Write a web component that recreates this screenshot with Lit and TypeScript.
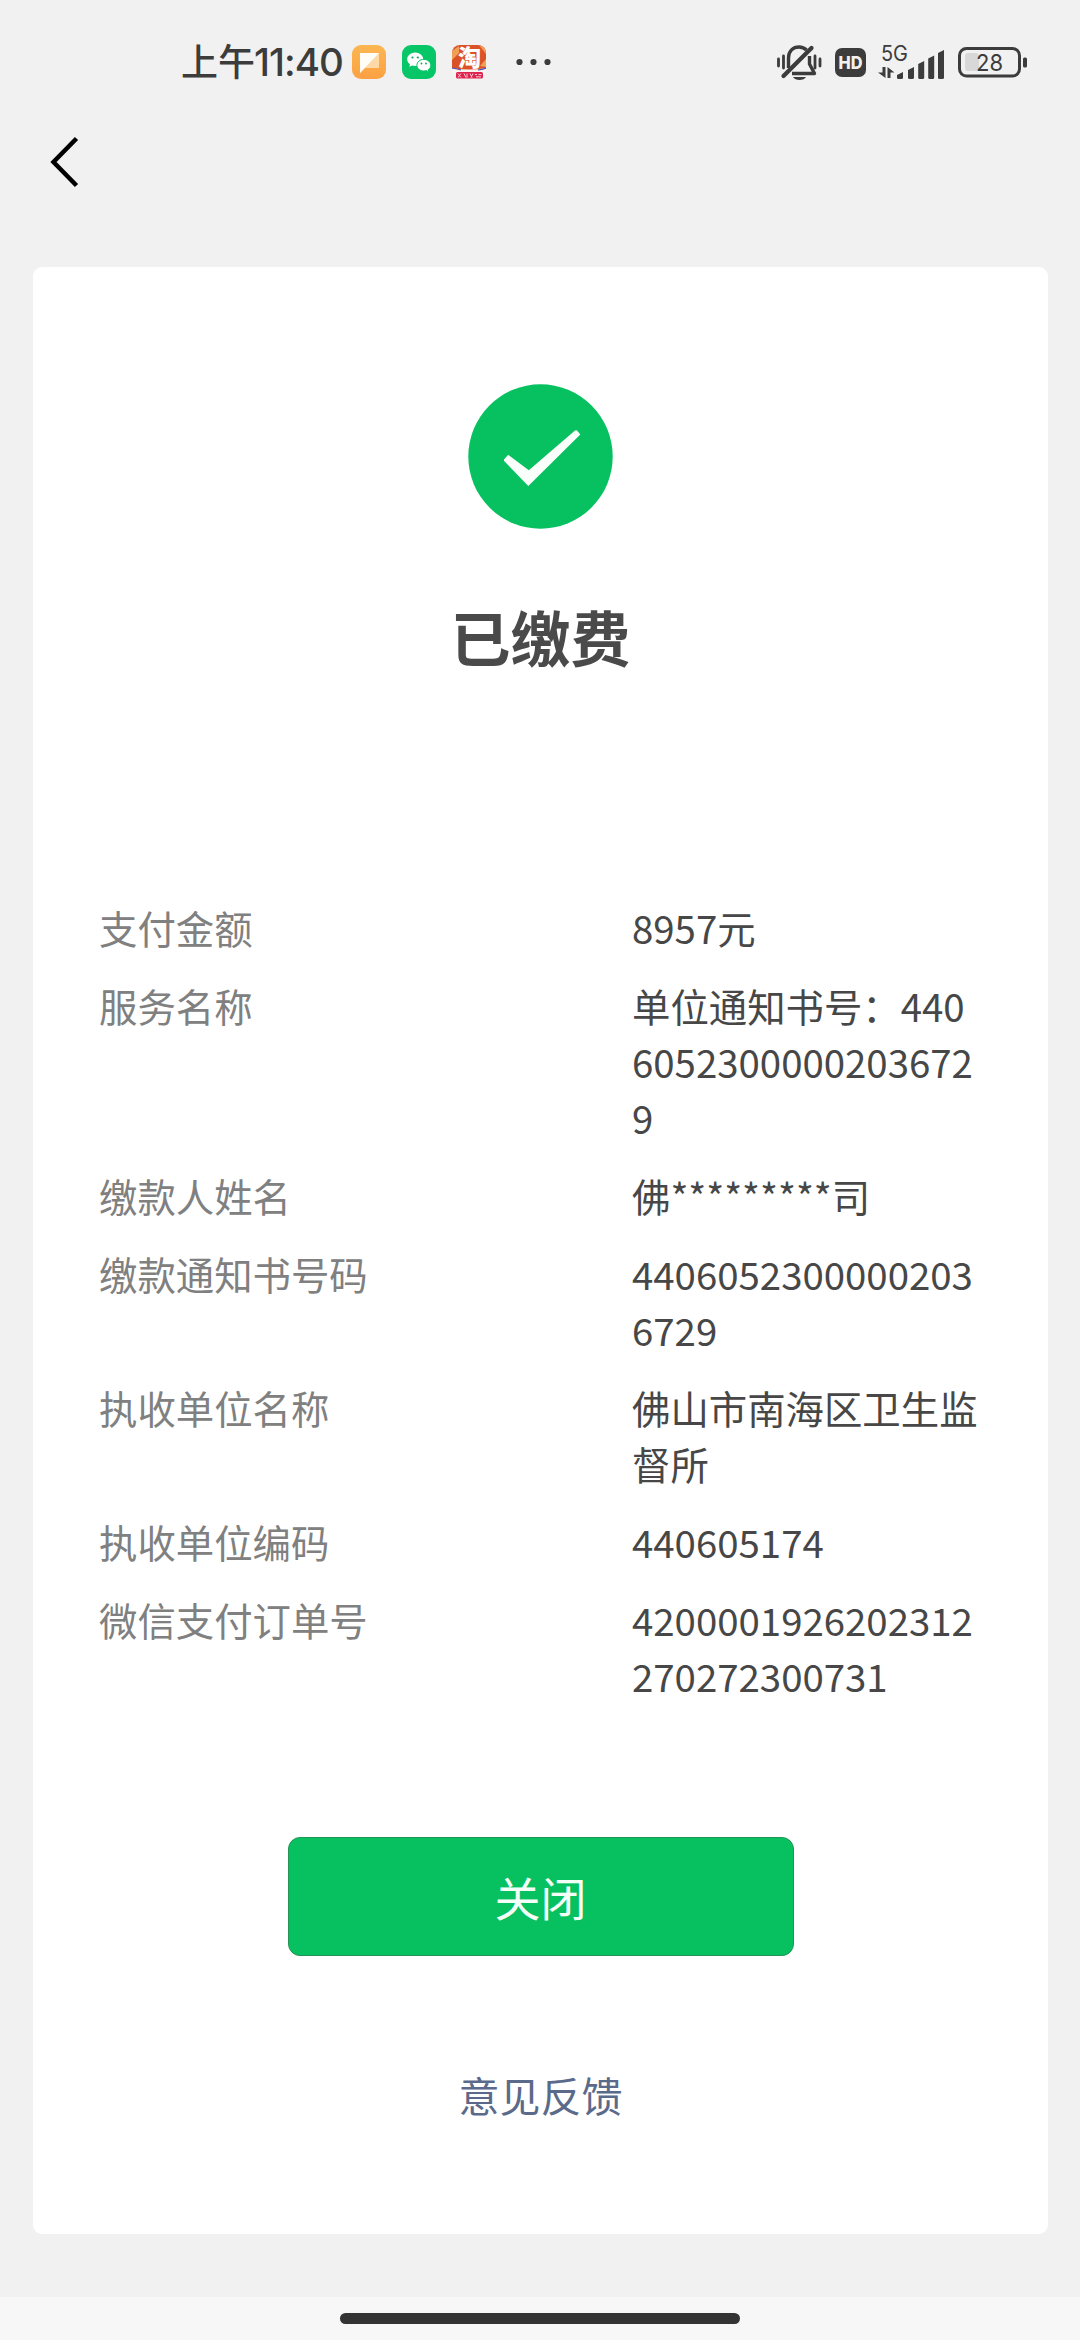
import { LitElement, html, css, svg } from "lit";
import { customElement } from "lit/decorators.js";

const INK = "#3c3c3c";

@customElement("status-bar")
class StatusBar extends LitElement {
  static styles = css`
    :host { display: flex; justify-content: space-between; align-items: center; height: 124px; padding: 0 52px 0 181px; box-sizing: border-box; }
    .left, .right { display: flex; align-items: center; }
    .time { display: flex; align-items: center; color: #3c3c3c; font-weight: 500; line-height: 50px; white-space: nowrap; }
    .ampm { font-family: "Noto Sans CJK SC", sans-serif; font-size: 37px; width: 73px; margin-top: -4px; }
    .clock { font-family: Inter, sans-serif; font-size: 38.5px; letter-spacing: -1px; width: 98px; }
    .apps { display: flex; gap: 16px; }
    .more { margin-left: 29px; }
    svg { display: block; overflow: visible; }
    .hd { margin-left: 13px; }
    .signal { margin-left: 12px; }
    .battery { margin-left: 13px; }
  `;
  render() {
    return html`
      <div class="left">
        <div class="time"><span class="ampm">上午</span><span class="clock">11:40</span></div>
        <div class="apps">
          <svg width="34" height="34" viewBox="0 0 34 34">
            <defs><linearGradient id="o" x1="0" y1="0" x2="0" y2="1"><stop offset="0" stop-color="#fbb652"/><stop offset="1" stop-color="#fda143"/></linearGradient></defs>
            <rect width="34" height="34" rx="9" fill="url(#o)"/>
            <path d="M8 8H27V23H13L8 28Z" fill="#fdd9a8"/><path d="M8 8H27L8 28Z" fill="#fffdf6"/>
          </svg>
          <svg width="34" height="34" viewBox="0 0 34 34">
            <rect width="34" height="34" rx="9" fill="#07c668"/>
            <path d="M13.200 7.500C8.800 7.500 5.200 10.500 5.200 14.200C5.200 16.300 6.300 18.100 8 19.300L7.300 21.800L10.200 20.400C11.200 20.700 12.200 20.900 13.200 20.900C17.600 20.900 21.200 17.900 21.200 14.200S17.600 7.500 13.200 7.500Z" fill="#fff"/>
            <path d="M21.800 14.400C17.900 14.400 14.900 17 14.900 20.200S17.900 26 21.800 26C22.700 26 23.500 25.900 24.300 25.600L26.900 26.900L26.300 24.600C27.900 23.600 28.800 22 28.800 20.200C28.800 17 25.700 14.400 21.800 14.400Z" fill="#fff" stroke="#07c668" stroke-width="1"/>
            <g fill="#07a858"><circle cx="10.500" cy="12.500" r="1.100"/><circle cx="15.800" cy="12.500" r="1.100"/><circle cx="19.500" cy="18.500" r=".9"/><circle cx="24" cy="18.500" r=".9"/></g>
          </svg>
          <svg width="34" height="34" viewBox="0 0 34 34">
            <defs><clipPath id="c"><rect width="34" height="34" rx="8"/></clipPath></defs>
            <g clip-path="url(#c)">
              <rect width="34" height="34" fill="#fbf3f0"/>
              <path d="M0 0H34V23Q17 26 0 23Z" fill="#dc5228"/>
              <path d="M0 6L7 1V8L0 15ZM27 0L34 9V3ZM28 21L34 14V22Z" fill="#f0a052"/>
              <path d="M0 23Q6 24 9 25M26 25Q30 24.500 34 23" fill="none" stroke="#4a4fb0" stroke-width="1.200"/>
            </g>
            <text x="17.500" y="21" text-anchor="middle" font-family="Noto Sans CJK SC" font-weight="900" font-size="23" fill="#fff">淘</text>
            <rect x="4" y="27" width="27" height="6.500" rx="1.500" fill="#dd2450"/>
            <path d="M6 28.500l3 4M9 28.500l-3 4M12 28.500l2 4M15 28.500v4M18 28.500l2 4M21 28.500l-2 4M23 29.500h2M26.500 29.500h3M24 31.800h5" stroke="#fbd7de" stroke-width=".9"/>
          </svg>
        </div>
        <svg class="more" width="36" height="8" viewBox="0 0 36 8" fill=${INK}><circle cx="4.500" cy="4" r="3.100"/><circle cx="18.500" cy="4" r="3.100"/><circle cx="32.500" cy="4" r="3.100"/></svg>
      </div>
      <div class="right">
        <svg width="45" height="38" viewBox="0 0 45 38" fill="none" stroke=${INK} stroke-width="3.400">
          <path d="M11.500 25V15C11.500 8 16 4 22 4C25 4 27.500 5 29.500 7M32.500 13V21L37.500 30.500H15" stroke-linejoin="round"/>
          <path d="M6.500 33L34.500 5" stroke-width="4.200" stroke-linecap="round"/>
          <path d="M16 34H29C27 38 18 38 16 34Z" fill=${INK} stroke="none"/>
          <path d="M1.500 16V23M6.500 13V25M38 13V25M43 16V23" stroke-width="2.800" stroke-linecap="round"/>
        </svg>
        <svg class="hd" width="31" height="29" viewBox="0 0 31 29"><rect width="31" height="29" rx="7" fill=${INK}/><text x="15.500" y="20.700" text-anchor="middle" textLength="24" lengthAdjust="spacingAndGlyphs" font-family="Inter" font-weight="800" font-size="17.500" fill="#f1f1f1">HD</text></svg>
        <svg class="signal" width="67" height="34" viewBox="0 0 67 34" fill=${INK}>
          <text x="3" y="15.500" textLength="27" lengthAdjust="spacingAndGlyphs" font-family="Inter" font-weight="400" font-size="21">5G</text>
          <path d="M4.500 22H7.500V33L0 27.500H4.500ZM9.500 22L16.500 27.500H12.500V33H9.500Z"/>
          ${[[19, 27], [30, 22], [40.200, 16], [50.200, 10.500], [60, 5]].map(([x, y]) => svg`<path d="M${x} ${y + 3}L${x + 6} ${y}V32.500Q${x + 6} 34 ${x + 4.500} 34H${x + 1.500}Q${x} 34 ${x} 32.500Z"/>`)}
        </svg>
        <svg class="battery" width="70" height="31" viewBox="0 0 70 31">
          <rect x="7" y="6" width="14" height="18" rx="3" fill="#d8d8d8"/>
          <rect x="1.500" y="1.500" width="60" height="27.500" rx="7" fill="none" stroke=${INK} stroke-width="3"/>
          <rect x="65" y="10.500" width="4" height="10" rx="1.500" fill=${INK}/>
          <text x="31.500" y="23.500" text-anchor="middle" textLength="27" lengthAdjust="spacingAndGlyphs" font-family="Inter" font-weight="400" font-size="23.500" fill=${INK}>28</text>
        </svg>
      </div>`;
  }
}

const ROWS: [string, string][] = [
  ["支付金额", "8957元"],
  ["服务名称", "单位通知书号：44060523000002036729"],
  ["缴款人姓名", "佛*********司"],
  ["缴款通知书号码", "44060523000002036729"],
  ["执收单位名称", "佛山市南海区卫生监督所"],
  ["执收单位编码", "440605174"],
  ["微信支付订单号", "4200001926202312270272300731"],
];

@customElement("app-root")
class AppRoot extends LitElement {
  static styles = css`
    :host { display: flex; flex-direction: column; height: 2340px; width: 1080px; background: #f1f1f1; font-family: "Noto Sans CJK SC", sans-serif; overflow: hidden; }
    svg { display: block; }
    .nav { height: 143px; padding: 12px 0 0 50px; box-sizing: border-box; }
    .card { height: 1967px; margin: 0 32px 0 33px; box-sizing: border-box; padding: 117px 66px 0; background: #fff; border-radius: 9px; display: flex; flex-direction: column; align-items: center; }
    .title { margin: 62px 0 0; font-size: 60px; line-height: 90px; font-weight: 700; color: #4a4a4a; }
    .details { align-self: stretch; margin: 218px 0 0; display: flex; flex-direction: column; gap: 22px; font-size: 38.4px; line-height: 56px; }
    .row { display: grid; grid-template-columns: 533px 349px; }
    .label { color: #808080; }
    .value { margin: 0; color: #474747; word-break: break-all; }
    .close { margin-top: 134px; width: 506px; height: 119px; box-sizing: border-box; border: 1px solid #239455; border-radius: 12px; background: #07c160; color: #f4fff8; font: 400 46px/1 "Noto Sans CJK SC", sans-serif; padding: 0 0 2px; }
    .feedback { margin-top: 108px; font-size: 41px; line-height: 60px; color: #5b6a8a; text-decoration: none; }
    .home { margin-top: 63px; height: 43px; background: #f7f7f7; padding-top: 16px; box-sizing: border-box; }
    .pill { width: 400px; height: 11px; margin: 0 auto; border-radius: 6px; background: #333; }
  `;
  render() {
    return html`
      <status-bar></status-bar>
      <nav class="nav">
        <svg width="30" height="52" viewBox="0 0 30 52"><path d="M26.500 2.500L3.500 26L26.500 49.500" fill="none" stroke="#000" stroke-width="4.500"/></svg>
      </nav>
      <main class="card">
        <svg width="145" height="145" viewBox="0 0 145 145"><circle cx="72.500" cy="72.500" r="72.200" fill="#07c160"/><path d="M39.500 71.500L36 75.500Q35.700 76.500 36.300 77.200L60.300 102L112.300 50.500L109 46.500Q108 46 107 46.600L60.800 86.300L40.800 71.200Q40 70.900 39.500 71.500Z" fill="#fafffc"/></svg>
        <h1 class="title">已缴费</h1>
        <dl class="details">
          ${ROWS.map(([k, v]) => html`<div class="row"><dt class="label">${k}</dt><dd class="value">${v}</dd></div>`)}
        </dl>
        <button class="close">关闭</button>
        <a class="feedback">意见反馈</a>
      </main>
      <footer class="home"><div class="pill"></div></footer>`;
  }
}
